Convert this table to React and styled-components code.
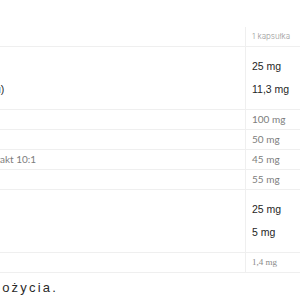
import React from "react";
import styled, { createGlobalStyle } from "styled-components";

const Global = createGlobalStyle`
  html, body { margin: 0; padding: 0; background: #fff; overflow: hidden; }
  body { width: 300px; height: 300px; }
`;

const Shift = styled.div`
  width: 464px;
  margin-left: -119px;
  padding-top: 27px;
`;

const Table = styled.table`
  width: 100%;
  border-collapse: collapse;
  table-layout: fixed;
`;

const Row = styled.tr`
  border-bottom: 1px solid #efefef;
`;

const Cell = styled.td`
  padding: ${(p) => (p.$tall ? "8px 6px" : "0 6px")};
  height: ${(p) => (p.$tall ? "46px" : "19px")};
  vertical-align: middle;
  white-space: nowrap;
  overflow: hidden;
  box-sizing: content-box;
  border-left: ${(p) => (p.$right ? "1px solid #efefef" : "none")};
  width: ${(p) => (p.$right ? "87px" : "auto")};
`;

const fonts = {
  head: `font-family: Inter, "Liberation Sans", sans-serif; font-weight: 300; font-size: 8px; color: #9a9a9a;`,
  sans: `font-family: "Liberation Sans", Arial, sans-serif; font-size: 10.5px; color: #1f1f1f;`,
  geo: `font-family: Lato, "Noto Sans", sans-serif; font-weight: 400; font-size: 10px; color: #7d7d7d;`,
  serif: `font-family: "Liberation Serif", serif; font-size: 9px; color: #8a8a8a;`,
};

const Text = styled.div`
  ${(p) => fonts[p.$f]}
  line-height: ${(p) => (p.$tall ? "23px" : "19px")};
`;

const Note = styled.p`
  margin: 8px 0 0;
  font-family: "Liberation Sans", Arial, sans-serif;
  font-size: 13px;
  letter-spacing: 2.2px;
  line-height: 14px;
  color: #2a2a2a;
  white-space: nowrap;
`;

const rows = [
  { tall: true, f: "sans", left: ["\u00a0", "(jako cytrynian magnezu)"], right: ["25 mg", "11,3 mg"] },
  { f: "geo", left: [], right: ["100 mg"] },
  { f: "geo", left: [], right: ["50 mg"] },
  { f: "geo", left: ["Różeniec górski L. — ekstrakt 10:1"], right: ["45 mg"] },
  { f: "geo", left: [], right: ["55 mg"] },
  { tall: true, f: "sans", left: [], right: ["25 mg", "5 mg"] },
  { f: "serif", left: [], right: ["1,4 mg"] },
];

export default function App() {
  return (
    <>
      <Global />
      <Shift>
        <Table>
          <tbody>
            <Row>
              <Cell />
              <Cell $right><Text $f="head">1 kapsułka</Text></Cell>
            </Row>
            {rows.map((r, i) => (
              <Row key={i}>
                <Cell $tall={r.tall}>
                  {r.left.map((t, j) => (
                    <Text key={j} $f={r.f} $tall={r.tall}>{t}</Text>
                  ))}
                </Cell>
                <Cell $tall={r.tall} $right>
                  {r.right.map((t, j) => (
                    <Text key={j} $f={r.f} $tall={r.tall}>{t}</Text>
                  ))}
                </Cell>
              </Row>
            ))}
          </tbody>
        </Table>
        <Note>1x porcja do spożycia.</Note>
      </Shift>
    </>
  );
}
